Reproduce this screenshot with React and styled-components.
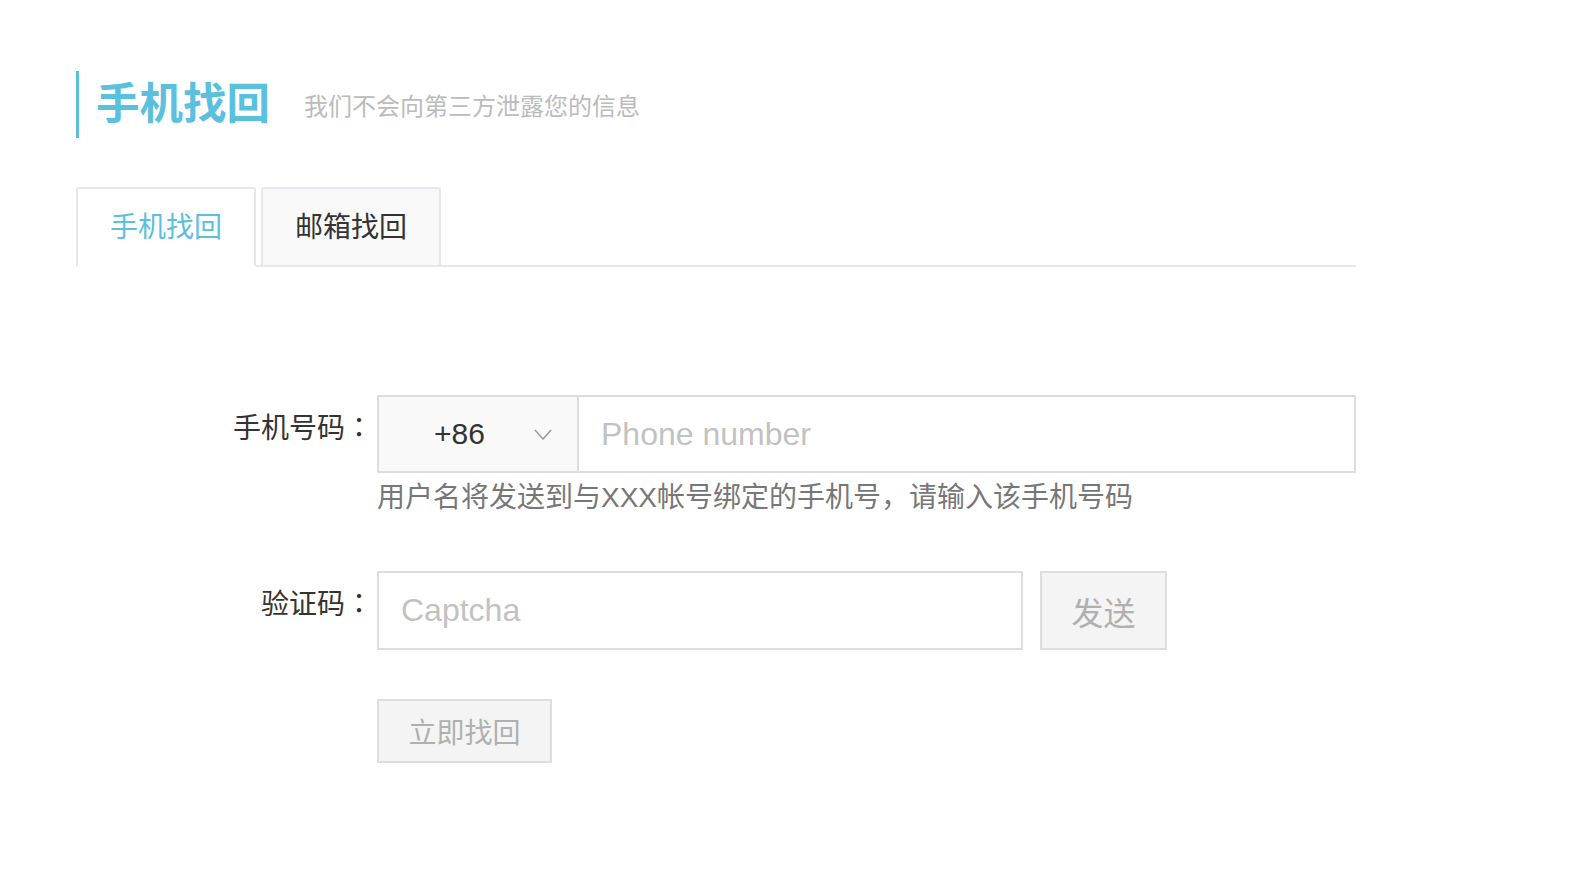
import React, { useState } from 'react';
import styled, { createGlobalStyle } from 'styled-components';

const GlobalStyle = createGlobalStyle`
	body {
		margin: 0;
		background: #fff;
		font-family: "Liberation Sans", "Noto Sans CJK SC", sans-serif;
		color: #333;
	}
	* {
		box-sizing: border-box;
	}
`;

const Page = styled.div`
	width: 1356px;
	padding: 71px 0 80px 76px;
`;

const Header = styled.div`
	display: flex;
	align-items: center;
	height: 67px;
	border-left: 3px solid #5bc0de;
	padding-left: 17px;
`;

const Title = styled.h1`
	margin: 0;
	font-size: 43.5px;
	line-height: 1;
	font-weight: 700;
	color: #5bc0de;
`;

const Subtitle = styled.span`
	margin-left: 34px;
	font-size: 24px;
	color: #bbb;
`;

const TabList = styled.div`
	display: flex;
	gap: 5px;
	margin-top: 49px;
	border-bottom: 2px solid #e4e7eb;
`;

const Tab = styled.button`
	width: 180px;
	height: 80px;
	margin-bottom: -2px;
	padding: 0 0 4px;
	font-family: inherit;
	font-size: 28px;
	cursor: pointer;
	border: 2px solid #e4e7eb;
	border-radius: 3px 3px 0 0;
	border-bottom-color: ${(p) => (p.$active ? '#fff' : '#e4e7eb')};
	background: ${(p) => (p.$active ? '#fff' : '#f9f9f9')};
	color: ${(p) => (p.$active ? '#5bc0de' : '#333')};
`;

const Form = styled.form`
	margin-top: 128px;
	display: flex;
	flex-direction: column;
`;

const Row = styled.div`
	display: grid;
	grid-template-columns: 297px 1fr;
	column-gap: 4px;
	margin-top: ${(p) => p.$top || 0}px;
`;

const Label = styled.label`
	padding-top: 12px;
	text-align: right;
	font-size: 28px;
	line-height: 39px;
	color: #333;
`;

const Colon = styled.span`
	font-family: "Noto Sans CJK TC", sans-serif;
`;

const Field = styled.div`
	display: flex;
	flex-direction: column;
`;

const InputGroup = styled.div`
	display: flex;
	width: 979px;
	height: 78px;
	border: 2px solid #ddd;
`;

const CodeSelect = styled.div`
	display: flex;
	align-items: center;
	width: 200px;
	padding-left: 55px;
	background: #f9f9f9;
	border-right: 2px solid #ddd;
	font-size: 30px;
	color: #333;

	svg {
		margin-left: 49px;
	}
`;

const TextInput = styled.input`
	flex: 1;
	min-width: 0;
	height: 100%;
	border: none;
	outline: none;
	padding: 0 22px;
	font-family: "Liberation Sans", sans-serif;
	font-size: 32px;
	color: #333;
	background: #fff;

	&::placeholder {
		color: #c2c2c2;
	}
`;

const BoxInput = styled(TextInput)`
	flex: none;
	width: 646px;
	height: 79px;
	border: 2px solid #ddd;
`;

const Help = styled.p`
	margin: 5px 0 0;
	font-size: 28px;
	line-height: 39px;
	color: #777;
`;

const Inline = styled.div`
	display: flex;
	gap: 17px;
`;

const GreyButton = styled.button`
	width: ${(p) => p.$width}px;
	height: ${(p) => p.$height}px;
	padding: 0;
	border: 2px solid #ddd;
	background: #f4f4f4;
	font-family: inherit;
	font-size: ${(p) => p.$size}px;
	color: #b0b0b0;
	cursor: not-allowed;
`;

const Chevron = () => (
	<svg width="18" height="11" viewBox="0 0 18 11" fill="none">
		<polyline points="1,1 9,10 17,1" stroke="#999" strokeWidth="1.5" />
	</svg>
);

const App = () => {
	const [tab, setTab] = useState('phone');

	return (
		<Page>
			<GlobalStyle />
			<Header>
				<Title>手机找回</Title>
				<Subtitle>我们不会向第三方泄露您的信息</Subtitle>
			</Header>

			<TabList>
				<Tab $active={tab === 'phone'} onClick={() => setTab('phone')}>手机找回</Tab>
				<Tab $active={tab === 'mail'} onClick={() => setTab('mail')}>邮箱找回</Tab>
			</TabList>

			<Form onSubmit={(e) => e.preventDefault()}>
				<Row>
					<Label>手机号码<Colon>：</Colon></Label>
					<Field>
						<InputGroup>
							<CodeSelect>
								+86
								<Chevron />
							</CodeSelect>
							<TextInput placeholder="Phone number" />
						</InputGroup>
						<Help>用户名将发送到与XXX帐号绑定的手机号，请输入该手机号码</Help>
					</Field>
				</Row>

				<Row $top={54}>
					<Label>验证码<Colon>：</Colon></Label>
					<Inline>
						<BoxInput placeholder="Captcha" />
						<GreyButton type="button" $width={127} $height={79} $size={32}>发送</GreyButton>
					</Inline>
				</Row>

				<Row $top={49}>
					<span />
					<div>
						<GreyButton type="submit" $width={175} $height={64} $size={28}>立即找回</GreyButton>
					</div>
				</Row>
			</Form>
		</Page>
	);
};

export default App;
